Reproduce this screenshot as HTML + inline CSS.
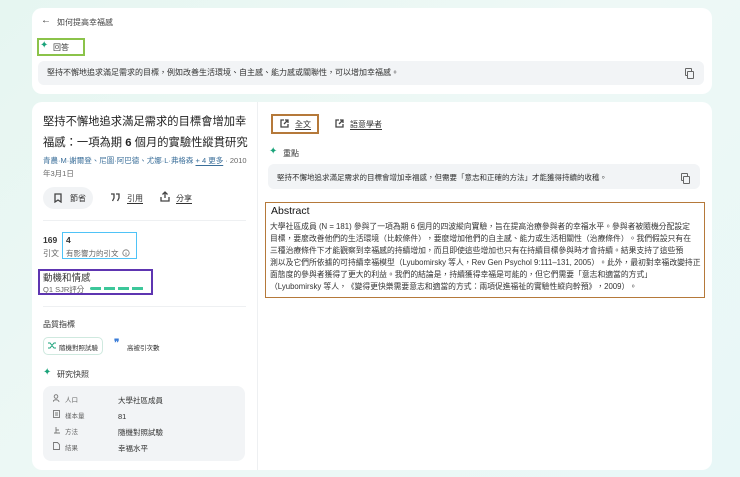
<!DOCTYPE html>
<html><head><meta charset="utf-8"><style>
*{margin:0;padding:0;box-sizing:border-box}
body{width:740px;height:477px;overflow:hidden;background:linear-gradient(135deg,#e6f6f1 0%,#eef8f6 50%,#e8f7f7 100%);font-family:"Liberation Sans","Noto Sans CJK TC",sans-serif;color:#333;position:relative}
.a{position:absolute;white-space:nowrap}
.card{position:absolute;background:#fff;border-radius:10px}
.gray{background:#f2f4f6;border-radius:6px}
.sp{color:#1aa37a;font-size:10px}
u{text-decoration:underline;text-underline-offset:2px}
svg{position:absolute;fill:none;stroke:#444;stroke-width:1.3}
</style></head><body>
<div class="card" style="left:32px;top:8px;width:680px;height:86px"></div>
<div class="a" style="left:41px;top:15px;font-size:10px">←</div>
<div class="a" style="left:57px;top:17px;font-size:8px;color:#444">如何提高幸福感</div>
<div class="a" style="left:37px;top:38px;width:48px;height:18px;border:2px solid #8bc34a"></div>
<div class="a sp" style="left:40px;top:40px">✦</div>
<div class="a" style="left:53px;top:42px;font-size:8px">回答</div>
<div class="a gray" style="left:38px;top:61px;width:666px;height:24px"></div>
<div class="a" style="left:47px;top:67px;font-size:8px;color:#333">堅持不懈地追求滿足需求的目標，例如改善生活環境、自主感、能力感或關聯性，可以增加幸福感。</div>
<div class="a" style="left:685px;top:68px;width:7px;height:8px;border:1.2px solid #666;border-radius:1px"></div>
<div class="a" style="left:687px;top:71px;width:7px;height:8px;border:1.2px solid #666;border-radius:1px;background:#f2f4f6"></div>

<div class="card" style="left:32px;top:102px;width:680px;height:368px"></div>
<div class="a" style="left:257px;top:102px;width:1px;height:368px;background:#eef0f2"></div>
<div class="a" style="left:43px;top:112px;font-size:11.3px;line-height:21px;color:#222">堅持不懈地追求滿足需求的目標會增加幸<br>福感：一項為期 <b>6</b> 個月的實驗性縱貫研究</div>
<div class="a" style="left:43px;top:154px;font-size:7.5px;line-height:13px;color:#3b6f9a">青農·M·謝爾登、尼圖·阿巴德、尤娜·L·弗格森 <u>+ 4 更多</u><span style="color:#666"> · 2010<br>年3月1日</span></div>
<div class="a" style="left:43px;top:187px;width:50px;height:22px;border-radius:11px;background:#f1f3f5"></div>
<svg style="left:54px;top:193px" width="8" height="10" viewBox="0 0 8 10"><path d="M1 1h6v8L4 7 1 9z"/></svg>
<div class="a" style="left:70px;top:193px;font-size:8px">節省</div>
<svg style="left:110px;top:193px" width="11" height="9" viewBox="0 0 11 9"><path d="M1 1h3v4l-1.5 3M6 1h3v4l-1.5 3"/></svg>
<div class="a" style="left:127px;top:193px;font-size:8px"><u>引用</u></div>
<svg style="left:160px;top:191px" width="10" height="11" viewBox="0 0 10 11"><path d="M5 7V1M2.5 3.5L5 1l2.5 2.5M1 6v4h8V6"/></svg>
<div class="a" style="left:176px;top:193px;font-size:8px"><u>分享</u></div>
<div class="a" style="left:43px;top:220px;width:203px;height:1px;background:#eef0f2"></div>
<div class="a" style="left:43px;top:235px;font-size:8.5px;font-weight:bold">169</div>
<div class="a" style="left:43px;top:248px;font-size:8px;color:#666">引文</div>
<div class="a" style="left:62px;top:232px;width:75px;height:27px;border:1.5px solid #4fc3f7"></div>
<div class="a" style="left:66px;top:235px;font-size:8.5px;font-weight:bold">4</div>
<div class="a" style="left:66px;top:248px;font-size:7.5px;color:#666">有影響力的引文</div>
<svg style="left:122px;top:249px;stroke:#777;stroke-width:0.8" width="8" height="8" viewBox="0 0 8 8"><circle cx="4" cy="4" r="3.2"/><path d="M4 3.5v2.5"/></svg>
<div class="a" style="left:38px;top:269px;width:115px;height:26px;border:2px solid #5e35b1"></div>
<div class="a" style="left:43px;top:270px;font-size:9.5px;color:#333">動機和情感</div>
<div class="a" style="left:43px;top:284px;font-size:7.5px;color:#666">Q1 SJR評分</div>
<div class="a" style="left:90px;top:287px;width:54px;height:3px;background:repeating-linear-gradient(90deg,#3cc79a 0 11px,transparent 11px 14px);border-radius:2px"></div>
<div class="a" style="left:43px;top:306px;width:203px;height:1px;background:#eef0f2"></div>
<div class="a" style="left:43px;top:319px;font-size:8px">品質指標</div>
<div class="a" style="left:43px;top:337px;width:60px;height:18px;border:1px solid #cfe9df;border-radius:5px"></div>
<svg style="left:48px;top:342px;stroke:#1aa37a;stroke-width:1" width="8" height="7" viewBox="0 0 8 7"><path d="M0 1h2l4 5h2M0 6h2l4-5h2"/></svg>
<div class="a" style="left:59px;top:342px;font-size:6.5px">隨機對照試驗</div>
<div class="a" style="left:114px;top:338px;font-size:10px;color:#3b7dd8;font-weight:bold">❞</div>
<div class="a" style="left:127px;top:342px;font-size:6.5px">高被引次數</div>
<div class="a sp" style="left:43px;top:367px">✦</div>
<div class="a" style="left:57px;top:369px;font-size:8px">研究快照</div>
<div class="a gray" style="left:43px;top:386px;width:202px;height:75px;border-radius:8px"></div>
<svg style="left:53px;top:394px;stroke:#777;stroke-width:0.9" width="8" height="8" viewBox="0 0 8 8"><circle cx="3" cy="2.5" r="1.8"/><path d="M0 8c0-3 6-3 6 0"/></svg>
<svg style="left:53px;top:410px;stroke:#777;stroke-width:0.9" width="7" height="8" viewBox="0 0 7 8"><rect x="0.5" y="0.5" width="6" height="7"/><path d="M2 3h3M2 5h3"/></svg>
<svg style="left:53px;top:426px;stroke:#777;stroke-width:0.9" width="8" height="8" viewBox="0 0 8 8"><path d="M3 1v6M3 4h3M1 7h6"/></svg>
<svg style="left:53px;top:442px;stroke:#777;stroke-width:0.9" width="7" height="8" viewBox="0 0 7 8"><path d="M0.5 0.5h4l2 2v5h-6z"/></svg>
<div class="a" style="left:65px;top:393px;font-size:6.5px;line-height:16px;color:#666">人口<br>樣本量<br>方法<br>結果</div>
<div class="a" style="left:118px;top:393px;font-size:7.5px;line-height:16px;color:#333">大學社區成員<br>81<br>隨機對照試驗<br>幸福水平</div>

<div class="a" style="left:271px;top:114px;width:48px;height:20px;border:2px solid #b5793a"></div>
<svg style="left:280px;top:119px" width="9" height="9" viewBox="0 0 9 9"><path d="M4 1H1v7h7V5M5 1h3v3M8 1L4 5"/></svg>
<div class="a" style="left:295px;top:119px;font-size:8px"><u>全文</u></div>
<svg style="left:335px;top:119px" width="9" height="9" viewBox="0 0 9 9"><path d="M4 1H1v7h7V5M5 1h3v3M8 1L4 5"/></svg>
<div class="a" style="left:350px;top:119px;font-size:8px"><u>語意學者</u></div>
<div class="a sp" style="left:269px;top:146px">✦</div>
<div class="a" style="left:283px;top:148px;font-size:8px">重點</div>
<div class="a gray" style="left:268px;top:164px;width:432px;height:25px"></div>
<div class="a" style="left:277px;top:172px;font-size:7.5px">堅持不懈地追求滿足需求的目標會增加幸福感，但需要「意志和正確的方法」才能獲得持續的收穫。</div>
<div class="a" style="left:681px;top:173px;width:7px;height:8px;border:1.2px solid #666;border-radius:1px"></div>
<div class="a" style="left:683px;top:176px;width:7px;height:8px;border:1.2px solid #666;border-radius:1px;background:#f2f4f6"></div>
<div class="a" style="left:265px;top:202px;width:440px;height:96px;border:1.5px solid #b5793a"></div>
<div class="a" style="left:271px;top:205px;font-size:10.5px;color:#111">Abstract</div>
<div class="a" style="left:270px;top:221px;font-size:7.8px;line-height:12px;color:#333">大學社區成員 (N = 181) 參與了一項為期 6 個月的四波縱向實驗，旨在提高治療參與者的幸福水平。參與者被隨機分配設定<br>目標，要麼改善他們的生活環境（比較條件），要麼增加他們的自主感、能力或生活相關性（治療條件）。我們假設只有在<br>三種治療條件下才能觀察到幸福感的持續增加，而且即使這些增加也只有在持續目標參與時才會持續。結果支持了這些預<br>測以及它們所依據的可持續幸福模型（Lyubomirsky 等人，Rev Gen Psychol 9:111–131, 2005）。此外，最初對幸福改變持正<br>面態度的參與者獲得了更大的利益。我們的結論是，持續獲得幸福是可能的，但它們需要「意志和適當的方式」<br>（Lyubomirsky 等人，《變得更快樂需要意志和適當的方式：兩項促進福祉的實驗性縱向幹預》，2009）。</div>
</body></html>
